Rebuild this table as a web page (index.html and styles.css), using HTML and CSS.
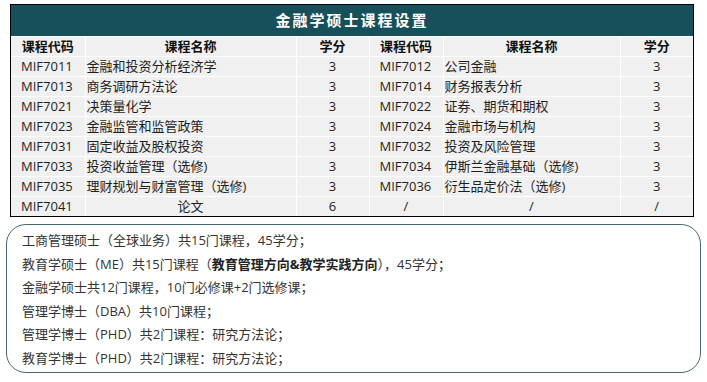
FILE: index.html
```html
<!DOCTYPE html>
<html lang="zh">
<head>
<meta charset="utf-8">
<link rel="stylesheet" href="styles.css">
</head>
<body>
<div class="page">
  <div class="table-frame">
  <table class="course">
    <colgroup>
      <col class="c-code"><col class="c-name"><col class="c-cr">
      <col class="c-code2"><col class="c-name2"><col class="c-cr2">
    </colgroup>
    <thead>
      <tr class="title-row"><th colspan="6">金融学硕士课程设置</th></tr>
      <tr class="head-row">
        <th>课程代码</th><th>课程名称</th><th>学分</th>
        <th>课程代码</th><th>课程名称</th><th>学分</th>
      </tr>
    </thead>
    <tbody>
      <tr><td class="code">MIF7011</td><td class="name">金融和投资分析经济学</td><td class="cr">3</td><td class="code">MIF7012</td><td class="name">公司金融</td><td class="cr">3</td></tr>
      <tr><td class="code">MIF7013</td><td class="name">商务调研方法论</td><td class="cr">3</td><td class="code">MIF7014</td><td class="name">财务报表分析</td><td class="cr">3</td></tr>
      <tr><td class="code">MIF7021</td><td class="name">决策量化学</td><td class="cr">3</td><td class="code">MIF7022</td><td class="name">证券、期货和期权</td><td class="cr">3</td></tr>
      <tr><td class="code">MIF7023</td><td class="name">金融监管和监管政策</td><td class="cr">3</td><td class="code">MIF7024</td><td class="name">金融市场与机构</td><td class="cr">3</td></tr>
      <tr><td class="code">MIF7031</td><td class="name">固定收益及股权投资</td><td class="cr">3</td><td class="code">MIF7032</td><td class="name">投资及风险管理</td><td class="cr">3</td></tr>
      <tr><td class="code">MIF7033</td><td class="name">投资收益管理（选修)</td><td class="cr">3</td><td class="code">MIF7034</td><td class="name">伊斯兰金融基础（选修)</td><td class="cr">3</td></tr>
      <tr><td class="code">MIF7035</td><td class="name">理财规划与财富管理（选修)</td><td class="cr">3</td><td class="code">MIF7036</td><td class="name">衍生品定价法（选修)</td><td class="cr">3</td></tr>
      <tr class="last"><td class="code">MIF7041</td><td class="cr">论文</td><td class="cr">6</td><td class="cr">/</td><td class="cr">/</td><td class="cr">/</td></tr>
    </tbody>
  </table>
  </div>

  <div class="notes">
    <p>工商管理硕士（全球业务）共15门课程，45学分；</p>
    <p>教育学硕士（ME）共15门课程（<b>教育管理方向&amp;教学实践方向</b>），45学分；</p>
    <p>金融学硕士共12门课程，10门必修课+2门选修课；</p>
    <p>管理学博士（DBA）共10门课程；</p>
    <p>管理学博士（PHD）共2门课程：研究方法论；</p>
    <p>教育学博士（PHD）共2门课程：研究方法论；</p>
  </div>
</div>
</body>
</html>
```

FILE: styles.css
```css
html, body {
  margin: 0;
  padding: 0;
  background: #ffffff;
}

.page {
  padding-top: 4px;
  font-family: "Open Sans", "Noto Sans CJK SC", sans-serif;
  font-size: 13px;
  color: #1e1e1e;
}

.table-frame {
  margin-left: 10px;
  width: 682px;
  border: 1px solid #000;
}

.course {
  width: 682px;
  table-layout: fixed;
  border-collapse: collapse;
  border: 0;
}

.c-code { width: 74px; }
.c-name { width: 211px; }
.c-cr { width: 73px; }
.c-code2 { width: 74px; }
.c-name2 { width: 177px; }
.c-cr2 { width: 73px; }

.course th,
.course td {
  padding: 0;
  height: 19px;
  line-height: 19px;
  background: #f0f0f0;
  border: 1px solid #ffffff;
  white-space: nowrap;
  overflow: hidden;
}

.course th:first-child,
.course td:first-child {
  border-left: 0;
}

.course th:last-child,
.course td:last-child {
  border-right: 0;
}

.course tr.last td {
  border-bottom: 0;
}

.title-row th {
  height: 31px;
  line-height: 31px;
  background: #17505a;
  color: #ffffff;
  font-size: 15px;
  font-weight: 700;
  text-align: center;
  letter-spacing: 2px;
  border: 0;
}

.head-row th {
  font-weight: 700;
  text-align: center;
  color: #111;
}

.course td.code {
  text-align: left;
  padding-left: 10px;
}

.course td.name {
  text-align: left;
  padding-left: 1px;
}

.course td.cr {
  text-align: center;
}

.notes {
  margin: 7px 0 0 6px;
  width: 693px;
  height: 143px;
  padding-top: 4px;
  box-sizing: content-box;
  border: 1.5px solid #46686e;
  border-radius: 20px;
  color: #333333;
}

.notes p {
  margin: 0;
  padding-left: 15px;
  line-height: 23.6px;
  white-space: nowrap;
}

.notes b {
  font-weight: 700;
  color: #222;
}
```
